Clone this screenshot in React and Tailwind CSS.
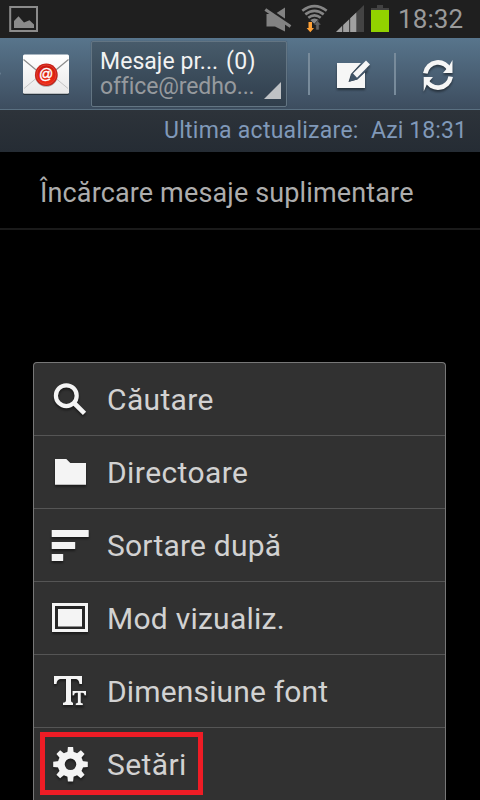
import React from "react";

const shadow = "drop-shadow-[0_2px_1px_rgba(0,0,0,0.45)]";

function SearchIcon() {
  return (
    <svg className={`h-[72px] w-[74px] ${shadow}`} viewBox="34 363 74 72" fill="none" stroke="#f4f4f4">
      <circle cx="66.3" cy="395.7" r="10.4" strokeWidth="4.2" />
      <path d="M73.5 402.5 L84.5 413.3" strokeWidth="4.6" />
    </svg>
  );
}

function FolderIcon() {
  return (
    <svg className={`h-[72px] w-[74px] ${shadow}`} viewBox="34 436 74 72" fill="#f4f4f4">
      <path d="M55 459 H66.3 L70.3 463 H86 V484.7 H55 Z" />
    </svg>
  );
}

function SortIcon() {
  return (
    <svg className={`h-[72px] w-[74px] ${shadow}`} viewBox="34 509 74 72" fill="#f4f4f4">
      <rect x="51.7" y="530" width="37" height="7" rx=".5" />
      <rect x="51.7" y="542" width="23.5" height="7" rx=".5" />
      <rect x="51.7" y="554" width="11.5" height="7" rx=".5" />
    </svg>
  );
}

function ViewIcon() {
  return (
    <svg className={`h-[72px] w-[74px] ${shadow}`} viewBox="34 582 74 72">
      <rect x="53.5" y="604.5" width="33" height="26" fill="#262626" stroke="#f4f4f4" strokeWidth="3" />
      <rect x="58" y="609" width="24" height="17.5" fill="#f4f4f4" />
    </svg>
  );
}

function FontIcon() {
  return (
    <svg className={`h-[72px] w-[74px] ${shadow}`} viewBox="34 655 74 72" fill="#f4f4f4">
      <path d="M54 676 H82 V684 H79.5 C79 680.5 78 679 75 679 H71 V700.5 C71 702 72 702.5 73 702.7 V705 H63 V702.7 C65 702.5 66 702 66 700 V679 H61.500 C58 679 57 680.5 56.500 684 H54 Z" />
      <path
        d="M72.600 691 H86 V695.300 H84.600 C84.300 693.400 83.700 692.700 82.300 692.700 H80.700 V702 C80.700 703 81.500 703.300 82.800 703.500 V705 H75.800 V703.500 C77.200 703.300 77.900 703 77.900 702 V692.700 H76.400 C74.900 692.700 74.300 693.400 74 695.300 H72.600 Z"
        stroke="#303030"
        strokeWidth="1.600"
        paintOrder="stroke"
      />
    </svg>
  );
}

const teeth = [0, 45, 90, 135, 180, 225, 270, 315];

function GearIcon() {
  return (
    <svg className={`h-[72px] w-[74px] ${shadow}`} viewBox="34 728 74 72">
      <circle cx="70.500" cy="764.300" r="9.300" fill="none" stroke="#f4f4f4" strokeWidth="7" />
      {teeth.map((a) => (
        <path key={a} d="M67.300 753 L67.900 747 H73.100 L73.700 753 Z" fill="#f4f4f4" transform={`rotate(${a} 70.5 764.3)`} />
      ))}
    </svg>
  );
}

const items = [
  { label: "Căutare", Icon: SearchIcon, spacing: "tracking-[0.35px]" },
  { label: "Directoare", Icon: FolderIcon, spacing: "tracking-[0.42px]" },
  { label: "Sortare după", Icon: SortIcon, spacing: "tracking-[0.2px]" },
  { label: "Mod vizualiz.", Icon: ViewIcon, spacing: "tracking-[0.25px]" },
  { label: "Dimensiune font", Icon: FontIcon, spacing: "tracking-[0.15px]" },
  { label: "Setări", Icon: GearIcon, spacing: "tracking-[0.4px]" },
];

function StatusBar() {
  return (
    <header className="flex h-[38px] shrink-0 items-center justify-between bg-[#1f1f1f] pr-4">
      <svg className="h-[38px] w-12" viewBox="0 0 48 38">
        <rect x="10.200" y="7" width="26.800" height="24" fill="none" stroke="#8b8b8b" strokeWidth="2" />
        <path d="M14 28 V21 L18.500 16.300 L24 22.500 L29.500 20.300 L34 24.500 V28 Z" fill="#8b8b8b" />
      </svg>
      <div className="flex items-center">
        <svg className="h-[38px] w-[134px]" viewBox="260 0 134 38">
          <g fill="#828282">
            <path d="M266.500 14 H275 L285 7.500 V31.500 L275 26.500 H266.500 Z" />
            <path d="M264.500 6.500 L291 24.500" stroke="#1f1f1f" strokeWidth="3" />
            <path d="M265.300 9.500 L290.500 26.500" stroke="#828282" strokeWidth="3" />
          </g>
          <g fill="none" stroke="#858585" strokeWidth="2.600">
            <path d="M302.300 10.800 Q314.500 1.500 326.700 10.800" />
            <path d="M305.300 14.400 Q314.500 7.400 323.700 14.400" />
            <path d="M308.300 17.800 Q314.500 13 320.700 17.800" />
          </g>
          <path d="M310.300 20 Q314.500 17 318.700 20 L314.500 24 Z" fill="#858585" />
          <path d="M308.500 22 H312 V28 H314 L310.300 32.300 L306.600 28 H308.500 Z" fill="#ffa136" />
          <path d="M317.500 20.500 L321.300 25 H319.200 V30 H315.800 V25 H313.700 Z" fill="#626262" stroke="#1f1f1f" strokeWidth=".6" />
          <path d="M336 32 L364 5 V32 Z" fill="#444" />
          <path d="M336 32 L342 26 V32 Z M343.200 25 L349 19.500 V32 H343.200 Z M350.200 18.300 L356.300 12.500 V32 H350.200 Z" fill="#a0a0a0" />
          <path d="M377 5 H383 V8 H389 V10 H371 V8 H377 Z" fill="#424242" />
          <rect x="371" y="10" width="18" height="22" fill="#92d100" />
        </svg>
        <span className="w-[70px] pl-[4px] text-[26px] leading-[38px] tracking-[0.1px] text-[#9a9a9a]">18:32</span>
      </div>
    </header>
  );
}

function ActionBar() {
  return (
    <div className="flex h-[72px] shrink-0 items-start border-b border-[#5a7081] bg-linear-to-b from-[#58758c] to-[#3d4d5f]">
      <svg className="h-[71px] w-[91px]" viewBox="0 38 91 71">
        <defs>
          <linearGradient id="paper" x1="0" y1="0" x2="0" y2="1">
            <stop offset="0" stopColor="#fff" />
            <stop offset="1" stopColor="#e9e9e9" />
          </linearGradient>
          <linearGradient id="seal" x1="0" y1="0" x2="0" y2="1">
            <stop offset="0" stopColor="#c91910" />
            <stop offset="1" stopColor="#f02b14" />
          </linearGradient>
        </defs>
        <path d="M0 72 L.8 73.500 L0 75" fill="#71889a" />
        <rect x="23" y="55.500" width="46" height="39.500" rx="1.500" fill="#26323c" />
        <rect x="23" y="54.500" width="46" height="39.300" rx="1.500" fill="url(#paper)" />
        <path d="M24 88.500 L39 76 M68 88.500 L53 76" stroke="#c4c4c4" strokeWidth="1" />
        <path d="M23.500 59.500 L41 74 M68.500 59.500 L51 74" stroke="#8c8c8c" strokeWidth="1.200" />
        <circle cx="46.300" cy="75.400" r="11.400" fill="#a8a8a8" />
        <circle cx="46.300" cy="74.700" r="11.300" fill="#c91f15" />
        <circle cx="46.300" cy="74.700" r="9.700" fill="url(#seal)" stroke="#ef5344" strokeWidth=".6" />
        <text x="46.200" y="78.600" textAnchor="middle" fontFamily="Liberation Sans, sans-serif" fontSize="14" fill="#fff" stroke="#fff" strokeWidth=".4">@</text>
      </svg>
      <div className="relative mt-[3px] h-[66px] w-[196px] rounded-xs border border-[#637583] bg-linear-to-b from-[#475b6b] to-[#303e4c] pl-2 shadow-[0_0_1px_#33414d]">
        <div className="flex h-[38px] text-[23px] leading-[40px] text-[#f2f2f2]">
          <span className="w-[126px] tracking-[0.05px] whitespace-nowrap">Mesaje pr...</span>
          <span className="tracking-[0.4px]">(0)</span>
        </div>
        <div className="-mt-[7px] text-[23px] leading-[28px] tracking-[-0.12px] text-[#969a9e]">office@redho...</div>
        <svg className="absolute right-[5px] bottom-[7px] h-[17px] w-[17px]" viewBox="0 0 17 17">
          <path d="M17 0 V17 H0 Z" fill="#bfc2c5" />
        </svg>
      </div>
      <svg className="h-[71px] w-[193px]" viewBox="287 38 193 71">
        <path d="M309 53 V95 M395 53 V95" stroke="#788b9b" strokeWidth="2" />
        <g className={shadow}>
          <path d="M337 63 H361 L351 74 L348.500 82 L357 79.500 L365 72 V88 H337 Z" fill="#f6f6f6" />
          <path d="M349.500 81.500 L351.300 74.300 L362 63.500 L368 69.500 L357.500 79.500 Z" fill="#405366" />
          <path d="M353 73.500 L366 60.500 L370 64.500 L357 77.700 Z" fill="#f6f6f6" />
        </g>
        <g className={shadow}>
          <path d="M425.300 73.300 A12.900 12.900 0 0 1 450 70.500 M450.700 76.700 A12.900 12.900 0 0 1 426 79.500" fill="none" stroke="#f6f6f6" strokeWidth="4.600" />
          <path d="M452.500 60 V73 H443 L449 66 Z M423.700 91.500 V77 H433 L427 84 Z" fill="#f6f6f6" />
        </g>
      </svg>
    </div>
  );
}

export default function App() {
  return (
    <div className="relative flex h-[800px] w-[480px] flex-col overflow-hidden bg-black font-[Roboto,sans-serif]">
      <StatusBar />
      <ActionBar />
      <div className="flex h-[42px] shrink-0 justify-end bg-linear-to-b from-[#2d333a] to-[#252c34] pr-[13px] text-[23px] leading-[42px] whitespace-nowrap text-[#8099b9]">
        <span className="w-[207px] tracking-[0.26px]">Ultima actualizare:</span>
        <span className="w-[96px] tracking-[0.1px]">Azi 18:31</span>
      </div>
      <div className="h-[78px] shrink-0 border-b-2 border-[#1a1a1a] pt-px pl-[40px] text-[27px] leading-[80px] tracking-[0.14px] whitespace-nowrap text-[#adadad]">
        Încărcare mesaje suplimentare
      </div>
      <nav className="mt-[132px] ml-[33px] h-[438px] w-[413px] shrink-0 rounded-t-[4px] border border-b-0 border-[#777] bg-[#313131]">
        {items.map(({ label, Icon, spacing }) => (
          <div key={label} className="flex h-[73px] items-start border-b border-[#555] last:h-[72px] last:border-b-0">
            <Icon />
            <span className={`-ml-px text-[30px] leading-[73px] whitespace-nowrap text-[#d2d2d2] ${spacing}`}>{label}</span>
          </div>
        ))}
      </nav>
      <div className="absolute top-[732px] left-[40px] h-[63px] w-[163px] border-5 border-[#ee1c25]" />
    </div>
  );
}
